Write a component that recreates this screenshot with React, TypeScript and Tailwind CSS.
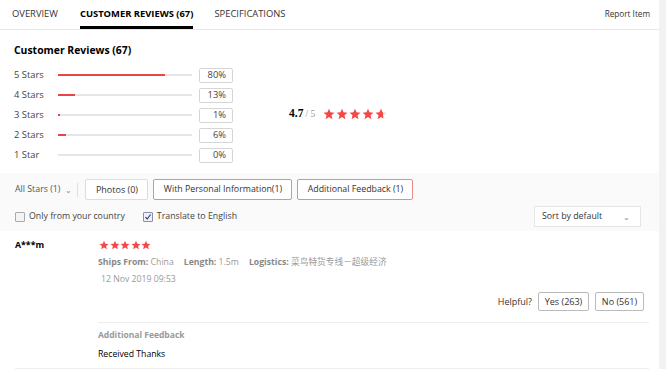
import React from 'react';

const rows = [
  { label: '5 Stars', pct: 80 },
  { label: '4 Stars', pct: 13 },
  { label: '3 Stars', pct: 1 },
  { label: '2 Stars', pct: 6 },
  { label: '1 Star', pct: 0 },
];

function Star({ size = 12, fill = '#f44747', half = false }: { size?: number; fill?: string; half?: boolean }) {
  const id = React.useId();
  return (
    <svg width={size} height={size} viewBox="0 0 24 24">
      {half && (
        <defs>
          <linearGradient id={id}>
            <stop offset="65%" stopColor={fill} />
            <stop offset="65%" stopColor="#dcdcdc" />
          </linearGradient>
        </defs>
      )}
      <path
        d="M12 1.5l3.1 7.2 7.8.7-5.9 5.2 1.8 7.7L12 18.2l-6.8 4.1 1.8-7.7-5.9-5.2 7.8-.7z"
        fill={half ? `url(#${id})` : fill}
      />
    </svg>
  );
}

export default function App() {
  return (
    <div className="w-[666px] h-[369px] overflow-hidden bg-[#f2f2f2] flex text-[#333] font-['Open_Sans',sans-serif]">
      <div className="w-[659px] bg-white flex flex-col">
        {/* tabs */}
        <div className="h-[30px] flex items-stretch border-b border-[#e8e8e8] pl-3 pr-[9px] text-[9.4px]">
          <div className="flex items-center mr-[22px] text-[#333]">OVERVIEW</div>
          <div className="flex items-center mr-[21px] font-bold text-black border-b-[3px] border-black pt-[3px]">CUSTOMER REVIEWS (67)</div>
          <div className="flex items-center">SPECIFICATIONS</div>
          <div className="ml-auto flex items-center text-[8.2px]">Report Item</div>
        </div>

        {/* summary */}
        <div className="px-[14px] pt-[11px]">
          <div className="text-[10.4px] font-bold text-black leading-[18px]">Customer Reviews (67)</div>
          <div className="flex mt-[6px]">
            <div className="flex flex-col">
              {rows.map((r) => (
                <div key={r.label} className="h-[20px] flex items-center text-[9.4px] text-[#444]">
                  <span className="w-[44px]">{r.label}</span>
                  <div className="w-[134px] h-[2px] bg-[#e6e6e6] relative">
                    <div className="absolute left-0 top-0 h-[2px] bg-[#e84545]" style={{ width: `${r.pct}%`, minWidth: r.pct > 0 ? 2 : 0 }} />
                  </div>
                  <div className="ml-[7px] w-[34px] h-[15px] border border-[#d5d5d5] rounded-[2px] flex items-center justify-end pr-[6px] text-[9.4px]">{r.pct}%</div>
                </div>
              ))}
            </div>
            <div className="flex items-center ml-[56px] mb-[2px]">
              <span className="font-['Liberation_Serif',serif] text-[11.5px] font-bold text-black">4.7</span>
              <span className="font-['Liberation_Serif',serif] text-[9.5px] text-[#999] ml-[2px]">/ 5</span>
              <div className="flex ml-[8px] gap-[1px]">
                <Star />
                <Star />
                <Star />
                <Star />
                <Star half />
              </div>
            </div>
          </div>
        </div>

        {/* filters */}
        <div className="mt-[8px] bg-[#fafafa] px-[15px] pt-[6px] pb-[4px] text-[8.8px]">
          <div className="flex items-center h-[21px]">
            <span className="text-[#555] text-[8.8px]">All Stars (1)</span>
            <span className="ml-[5px] text-[#888] text-[8px]">⌄</span>
            <div className="w-px h-[14px] bg-[#e0e0e0] ml-[5px]" />
            <div className="ml-[7px] h-[21px] w-[63px] flex items-center justify-center bg-white border border-[#ddd] rounded-[2px] text-[9px]">Photos (0)</div>
            <div className="ml-[5px] h-[21px] w-[139px] flex items-center justify-center bg-white border border-[#ea8a8a] rounded-[2px]">With Personal Information(1)</div>
            <div className="ml-[5px] h-[21px] w-[116px] flex items-center justify-center bg-white border border-[#ea8a8a] rounded-[2px]">Additional Feedback (1)</div>
          </div>
          <div className="flex items-center h-[21px] mt-[6px]">
            <div className="w-[10px] h-[10px] border border-[#aaa] bg-[#f4f4f4] rounded-[1px]" />
            <span className="ml-[4px] text-[#444]">Only from your country</span>
            <div className="ml-[18px] w-[10px] h-[10px] border border-[#8a8fb0] bg-[#eef] rounded-[1px] flex items-center justify-center">
              <svg width="8" height="8" viewBox="0 0 8 8"><path d="M1.5 4.2l1.7 1.8L6.6 1.5" stroke="#334" strokeWidth="1.1" fill="none" /></svg>
            </div>
            <span className="ml-[4px] text-[#444]">Translate to English</span>
            <div className="ml-auto mr-[3px] w-[107px] h-[21px] bg-white border border-[#e6e6e6] flex items-center pl-[7px] pr-[10px]">
              <span>Sort by default</span>
              <span className="ml-auto text-[8px] text-[#888]">⌄</span>
            </div>
          </div>
        </div>

        {/* review */}
        <div className="flex-1 ml-[15px] mr-[10px] border-b border-[#eee] flex">
          <div className="w-[83px] pt-[8px] text-[8.8px] font-bold text-black">A***m</div>
          <div className="flex-1 pt-[9px] flex flex-col">
            <div className="flex gap-[0.5px] pl-[1px]">
              {[0, 1, 2, 3, 4].map((i) => <Star key={i} size={10} />)}
            </div>
            <div className="mt-[5px] text-[8.7px] text-[#999] leading-[14px] font-['Open_Sans','Noto_Sans_CJK_SC',sans-serif]">
              <span className="font-bold text-[#888]">Ships From:</span> China
              <span className="ml-[10px] font-bold text-[#888]">Length:</span> 1.5m
              <span className="ml-[10px] font-bold text-[#888]">Logistics:</span> 菜鸟特货专线－超级经济
            </div>
            <div className="mt-[3px] ml-[3px] text-[8.7px] text-[#999] leading-[14px]">12 Nov 2019 09:53</div>
            <div className="flex items-center justify-end mt-[6px] mr-[5px] text-[9px]">
              <span className="mr-[6px]">Helpful?</span>
              <div className="h-[19px] w-[51px] flex items-center justify-center border border-[#bbb] rounded-[2px]">Yes (263)</div>
              <div className="ml-[6px] h-[19px] w-[49px] flex items-center justify-center border border-[#bbb] rounded-[2px]">No (561)</div>
            </div>
            <div className="mt-[11px] border-t border-[#eee]" />
            <div className="mt-[5px] text-[8.5px] font-bold text-[#999] leading-[14px]">Additional Feedback</div>
            <div className="mt-[5px] text-[8.7px] text-black leading-[14px]">Received Thanks</div>
          </div>
        </div>
      </div>
    </div>
  );
}
